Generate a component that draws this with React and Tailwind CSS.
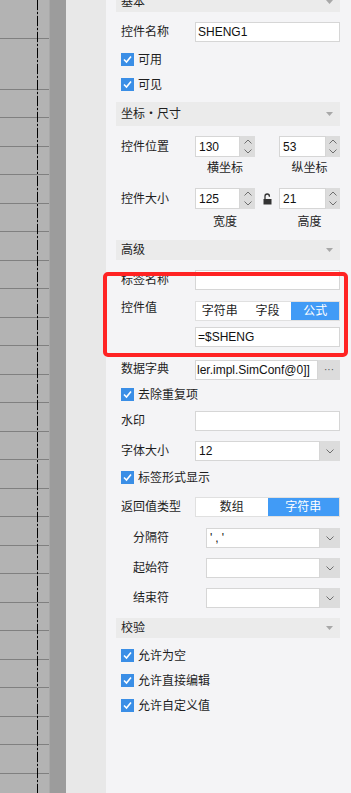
import React from "react";

const FONT = { fontFamily: "'Liberation Sans', 'Noto Sans CJK SC', sans-serif" };

function Tri() {
  return (
    <svg width="7" height="4" viewBox="0 0 7 4" className="block">
      <path d="M0 0 H7 L3.5 4 Z" fill="#a8a8a8" />
    </svg>
  );
}

function Header({ title, cls }) {
  return (
    <div className={`flex items-center justify-between bg-[#ebebeb] pl-[5px] pr-[7px] text-[12px] text-[#1e1e1e] ${cls}`}>
      <span>{title}</span>
      <Tri />
    </div>
  );
}

function Check() {
  return (
    <span className="flex h-[13px] w-[13px] items-center justify-center bg-[#3a8ee6]">
      <svg width="11" height="11" viewBox="0 0 11 11">
        <path d="M2 5.5 L4.5 8 L9 2.5" stroke="#fff" strokeWidth="1.6" fill="none" />
      </svg>
    </span>
  );
}

function CheckRow({ label, cls }) {
  return (
    <div className={`flex h-[25px] items-center gap-[4px] pl-[5px] text-[12px] text-[#1e1e1e] ${cls || ""}`}>
      <Check />
      <span>{label}</span>
    </div>
  );
}

function Label({ children, cls }) {
  return <div className={`w-[79px] shrink-0 pl-[5px] text-[12px] text-[#1e1e1e] ${cls || ""}`}>{children}</div>;
}

function Input({ value }) {
  return (
    <div className="flex h-[20px] flex-1 items-center border border-[#d6d6d6] bg-white pl-[2px] text-[12px] text-[#111]">
      {value}
    </div>
  );
}

function Chevron({ up }) {
  return (
    <svg width="8" height="5" viewBox="0 0 8 5" className="block">
      <path d={up ? "M0.5 4.5 L4 1 L7.5 4.5" : "M0.5 0.5 L4 4 L7.5 0.5"} stroke="#6e6e6e" strokeWidth="1" fill="none" />
    </svg>
  );
}

function Spinner({ value, w, bw }) {
  return (
    <div className={`flex h-[21px] ${w}`}>
      <div className="flex flex-1 items-center border border-[#d6d6d6] bg-white pl-[3px] text-[12px] text-[#111]">{value}</div>
      <div className={`flex ${bw} flex-col items-center justify-between bg-[#dcdcdc] py-[3px]`}>
        <Chevron up />
        <Chevron />
      </div>
    </div>
  );
}

function Select({ value, track }) {
  return (
    <div className="flex h-[20px] flex-1">
      <div className={`flex flex-1 items-center border border-[#d6d6d6] bg-white pl-[3px] text-[12px] text-[#111] ${track || ""}`}>
        {value}
      </div>
      <div className="flex w-[20px] items-center justify-center bg-[#dcdcdc]">
        <Chevron />
      </div>
    </div>
  );
}

function Lock() {
  return (
    <svg width="9" height="12" viewBox="0 0 9 12" className="block">
      <path d="M2 6 V3.2 A2.2 2.2 0 0 1 6.4 3.2 V3.8" stroke="#333" strokeWidth="1.3" fill="none" />
      <rect x="0.5" y="6" width="8" height="5.5" fill="#333" />
    </svg>
  );
}

export default function App() {
  const rows = Array.from({ length: 26 }, (_, i) => i);
  return (
    <div className="relative flex h-[793px] w-[351px] overflow-hidden" style={FONT}>
      {/* canvas */}
      <div className="relative h-full w-[49px] shrink-0 bg-[#b3b3b3]">
        <div className="h-[39px] border-b border-[#808080]" />
        <div className="h-[51px] border-b border-[#808080]" />
        {rows.map((i) => (
          <div key={i} className={`border-b border-[#808080] ${i % 2 === 0 ? "h-[28px]" : "h-[29px]"}`} />
        ))}
        <svg className="absolute left-[37px] top-0" width="1" height="793">
          <line x1="0.5" y1="0" x2="0.5" y2="793" stroke="#959595" strokeWidth="1" />
          <line x1="0.5" y1="0" x2="0.5" y2="793" stroke="#000" strokeWidth="1" strokeDasharray="10 2 2 2" />
        </svg>
      </div>
      <div className="h-full w-[1px] shrink-0 bg-[#a9a9a9]" />
      <div className="h-full w-[16px] shrink-0 bg-[#9c9c9c]" />
      <div className="h-full w-[40px] shrink-0 bg-[#e8e8e8]" />

      {/* panel */}
      <div className="flex h-full flex-1 flex-col bg-[#f4f4f6] pl-[10px] pr-[11px]">
        <Header title="基本" cls="-mt-[8px] h-[20px]" />
        <div className="mt-[10px] flex h-[20px] items-center">
          <Label>控件名称</Label>
          <Input value="SHENG1" />
        </div>
        <CheckRow label="可用" cls="mt-[5px]" />
        <CheckRow label="可见" />

        <Header title="坐标・尺寸" cls="mt-[5px] h-[24px]" />
        <div className="mt-[10px] flex h-[21px] items-center">
          <Label>控件位置</Label>
          <Spinner value="130" w="w-[60px]" bw="w-[15px]" />
          <div className="w-[24px]" />
          <Spinner value="53" w="w-[61px]" bw="w-[14px]" />
        </div>
        <div className="flex h-[22px] items-center text-[12px] text-[#1e1e1e]">
          <div className="w-[79px]" />
          <div className="w-[60px] text-center">横坐标</div>
          <div className="w-[24px]" />
          <div className="w-[61px] text-center">纵坐标</div>
        </div>
        <div className="mt-[9px] flex h-[21px] items-center">
          <Label>控件大小</Label>
          <Spinner value="125" w="w-[60px]" bw="w-[15px]" />
          <div className="flex w-[24px] justify-center">
            <Lock />
          </div>
          <Spinner value="21" w="w-[61px]" bw="w-[14px]" />
        </div>
        <div className="flex h-[26px] items-center text-[12px] text-[#1e1e1e]">
          <div className="w-[79px]" />
          <div className="w-[60px] text-center">宽度</div>
          <div className="w-[24px]" />
          <div className="w-[61px] text-center">高度</div>
        </div>

        <Header title="高级" cls="mt-[5px] h-[20px]" />
        <div className="mt-[10px] flex h-[20px] items-center">
          <Label>标签名称</Label>
          <Input value="" />
        </div>
        <div className="mt-[11px] flex items-start">
          <Label cls="h-[14px] leading-[14px]">控件值</Label>
          <div className="flex flex-1 flex-col gap-[6px]">
            <div className="flex h-[20px] border border-[#e0e0e0] bg-white text-[12px]">
              <div className="flex flex-1 items-center justify-center text-[#1e1e1e]">字符串</div>
              <div className="flex flex-1 items-center justify-center text-[#1e1e1e]">字段</div>
              <div className="flex flex-1 items-center justify-center bg-[#419bf6] text-white">公式</div>
            </div>
            <Input value="=$SHENG" />
          </div>
        </div>
        <div className="mt-[13px] flex h-[20px] items-center">
          <Label cls="pb-[3px]">数据字典</Label>
          <div className="flex h-[20px] flex-1">
            <div className="flex flex-1 items-center overflow-hidden whitespace-nowrap border border-[#d6d6d6] bg-white pl-[1px] text-[12px] text-[#111]">
              ler.impl.SimConf@0]]
            </div>
            <div className="flex w-[22px] items-center justify-center bg-[#dcdcdc] text-[10px] leading-none text-[#555]">
              ···
            </div>
          </div>
        </div>
        <CheckRow label="去除重复项" cls="mt-[2px]" />
        <div className="mt-[4px] flex h-[20px] items-center">
          <Label>水印</Label>
          <Input value="" />
        </div>
        <div className="mt-[10px] flex h-[20px] items-center">
          <Label>字体大小</Label>
          <Select value="12" />
        </div>
        <CheckRow label="标签形式显示" cls="mt-[4px]" />
        <div className="mt-[7px] flex h-[20px] items-center">
          <Label>返回值类型</Label>
          <div className="flex h-[20px] flex-1 border border-[#e0e0e0] bg-white text-[12px]">
            <div className="flex flex-1 items-center justify-center text-[#1e1e1e]">数组</div>
            <div className="flex flex-1 items-center justify-center bg-[#419bf6] text-white">字符串</div>
          </div>
        </div>
        <div className="mt-[11px] flex h-[20px] items-center">
          <div className="w-[90px] shrink-0 pl-[17px] text-[12px] text-[#1e1e1e]">分隔符</div>
          <Select value="','" track="tracking-[3px]" />
        </div>
        <div className="mt-[10px] flex h-[20px] items-center">
          <div className="w-[90px] shrink-0 pl-[17px] text-[12px] text-[#1e1e1e]">起始符</div>
          <Select value="" />
        </div>
        <div className="mt-[10px] flex h-[20px] items-center">
          <div className="w-[90px] shrink-0 pl-[17px] text-[12px] text-[#1e1e1e]">结束符</div>
          <Select value="" />
        </div>

        <Header title="校验" cls="mt-[10px] h-[20px]" />
        <CheckRow label="允许为空" cls="mt-[5px]" />
        <CheckRow label="允许直接编辑" />
        <CheckRow label="允许自定义值" />
      </div>

      {/* red annotation */}
      <div className="pointer-events-none absolute left-[103px] top-[272px] h-[85px] w-[245px] rounded-[5px] border-[4px] border-[#ff2323]" />
    </div>
  );
}
